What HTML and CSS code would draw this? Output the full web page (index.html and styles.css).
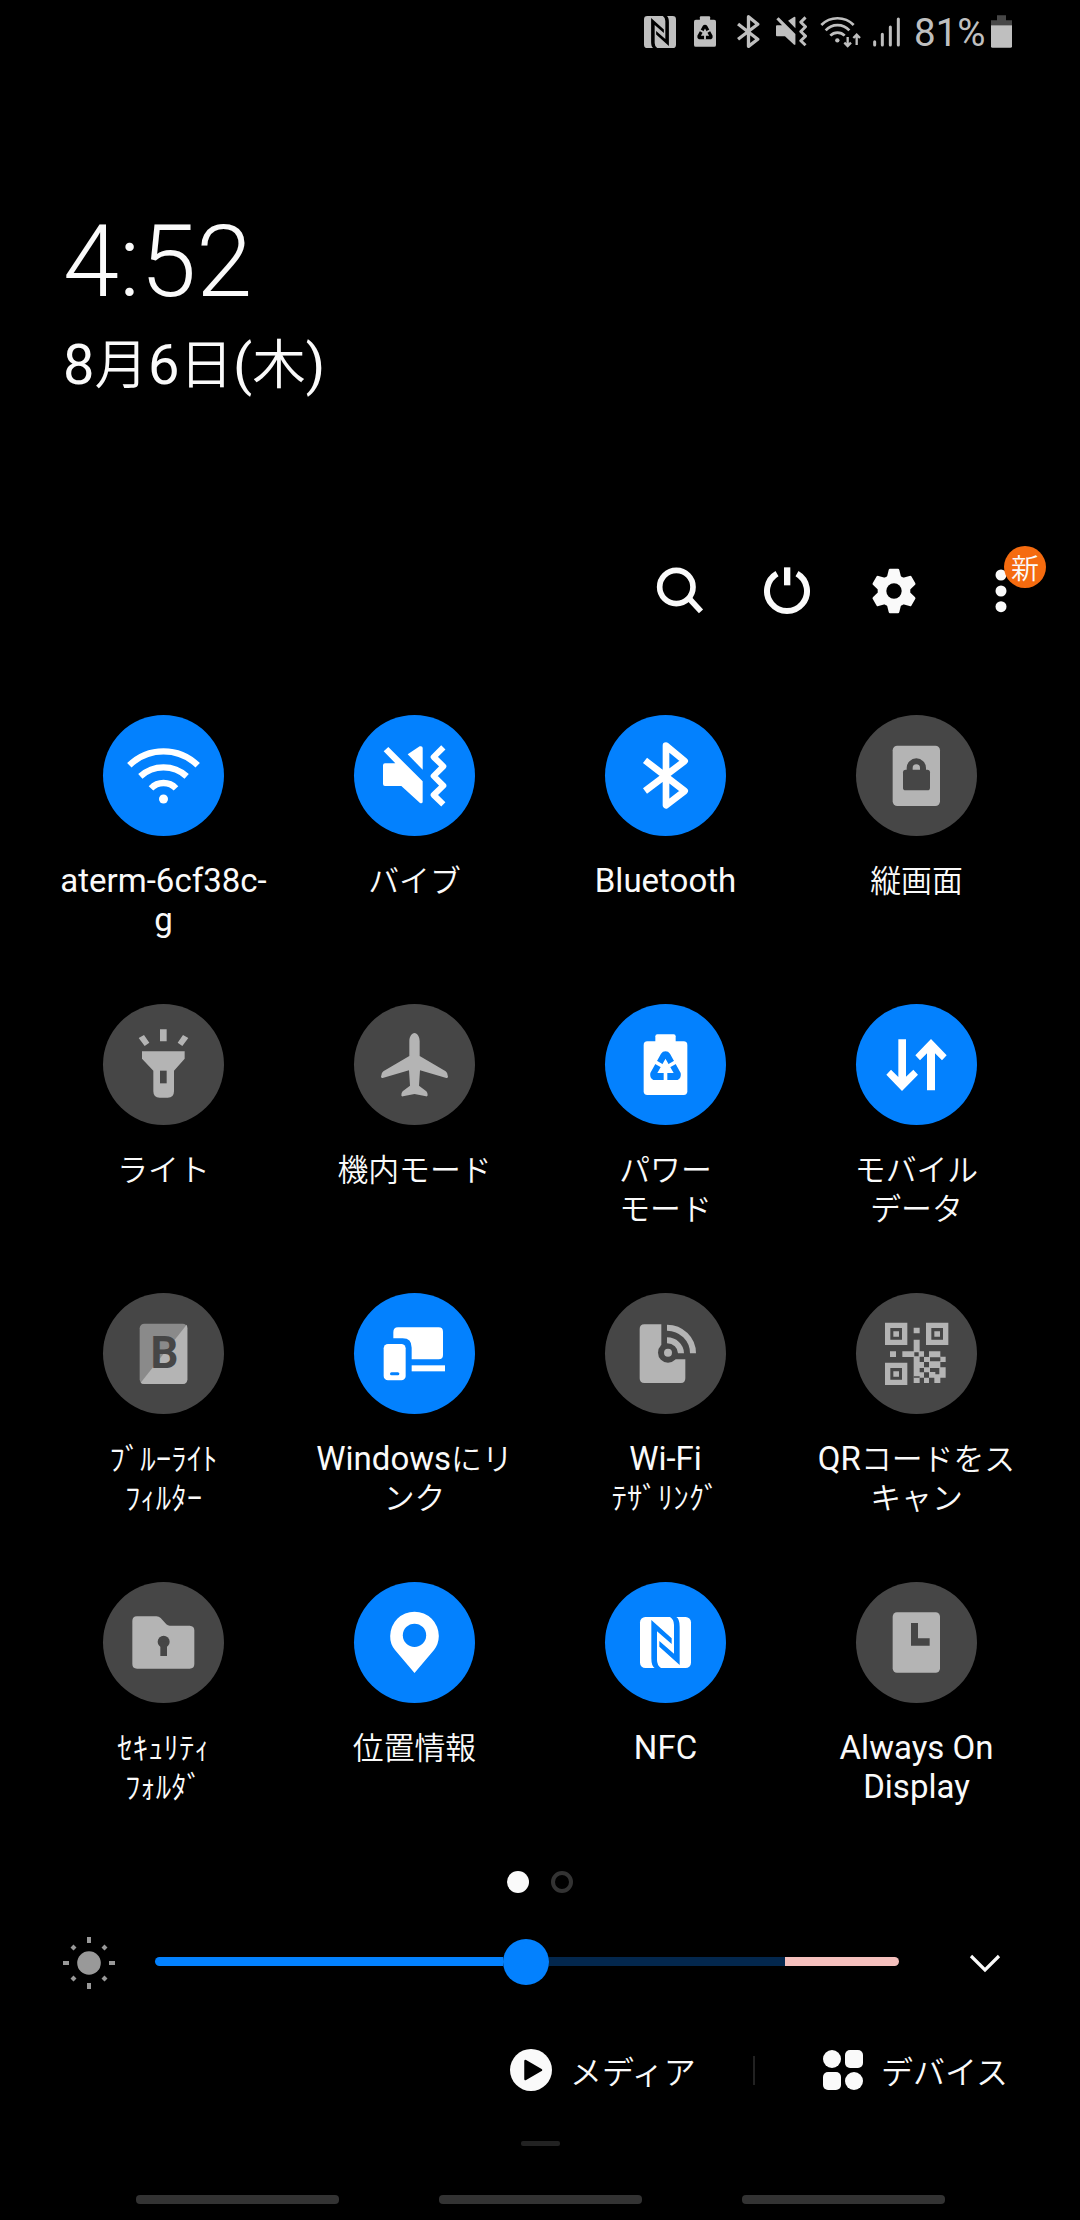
FILE: index.html
```
<!DOCTYPE html>
<html lang="ja">
<head>
  <meta charset="UTF-8">
  <meta name="viewport" content="width=device-width, initial-scale=1.0">
  <title>クイック設定パネル</title>
  <link rel="stylesheet" href="styles.css">
</head>
<body>
  <!-- icons used both in the status bar and in the tiles -->
  <svg class="defs">
    <defs>
      <g id="nfc">
        <rect x="105" y="105" width="153" height="153" rx="16" fill="currentColor"/>
        <path class="cut" d="M139 114L200 169V186L156 148V234Q156 250 168 258H149Q139 252 139 229Z"/>
        <path class="cut" d="M224 249L163 194V177L207 215V129Q207 113 195 105H214Q224 111 224 134Z"/>
      </g>
      <g id="power-mode">
        <rect x="116" y="112" width="131" height="161" rx="11" fill="currentColor"/>
        <rect x="151" y="91" width="61" height="30" rx="6" fill="currentColor"/>
        <path class="cut" fill-rule="evenodd" d="M168 149Q173 142 181.500 142Q190 142 195 149L227 207Q230 222 218 228H145Q133 222 136 207ZM181.500 164L157 207H206Z"/>
        <path d="M181.500 200V230M149 173L172 186M214 173L191 186" stroke="currentColor" stroke-width="11"/>
      </g>
      <g id="bluetooth">
        <path d="M120 136L239 228L183 271V92L239 138L120 228" fill="none" stroke="currentColor" stroke-width="20" stroke-linejoin="round"/>
      </g>
      <g id="vibrate">
        <path d="M103 96L206 199V261Q205 266 198 264L142 213H93Q87 213 87 207V151Q87 145 93 145H124L89 109Z" fill="currentColor"/>
        <path d="M206 164L161 118L197 94Q206 92 206 99Z" fill="currentColor"/>
        <path d="M268 97L239 126L268 154L239 183L268 212L239 240L268 268" fill="none" stroke="currentColor" stroke-width="18" stroke-linejoin="round"/>
      </g>
    </defs>
  </svg>

  <header class="status">
    <svg class="s-nfc" viewBox="105 105 153 153"><use href="#nfc"/></svg>
    <svg class="s-power" viewBox="116 91 131 182"><use href="#power-mode"/></svg>
    <svg class="s-bt" viewBox="111 82 138 199"><use href="#bluetooth"/></svg>
    <svg class="s-vib" viewBox="87 90 190 187"><use href="#vibrate"/></svg>
    <svg class="s-wifi" viewBox="0 0 123 96" fill="none" stroke="currentColor">
      <path d="M4 27A68 68 0 0 1 101 27M17 43A48 48 0 0 1 88 43M31 59A30 30 0 0 1 74 59" stroke-width="8"/>
      <circle cx="52" cy="73" r="6.500" fill="currentColor" stroke="none"/>
      <path d="M83 63V90M73 80L83 90L93 80M110 87V58M100 66L110 56L120 66" stroke-width="7"/>
    </svg>
    <svg class="s-signal" viewBox="0 0 81 90" stroke="currentColor" stroke-width="9" stroke-linecap="round">
      <path d="M5 74V84M28 52V84M52 30V84M76 6V84"/>
    </svg>
    <span class="percent">81%</span>
    <svg class="s-battery" viewBox="0 0 63 98">
      <path d="M18 0H45V15H63V30H0V15H18Z" fill="#474747"/>
      <path d="M0 30H63V93Q63 98 58 98H5Q0 98 0 93Z" fill="currentColor"/>
    </svg>
  </header>

  <section class="clock">
    <div class="time">4:52</div>
    <div class="date">8<span class="jp">月</span>6<span class="jp">日</span>(<span class="jp">木</span>)</div>
  </section>

  <nav class="toolbar">
    <svg viewBox="0 0 144 144" fill="none" stroke="currentColor" stroke-width="17">
      <circle cx="61" cy="60" r="50"/>
      <path d="M98 93L135 133"/>
    </svg>
    <svg viewBox="0 0 144 144">
      <path d="M42 20A60 60 0 1 0 102 20" fill="none" stroke="currentColor" stroke-width="18"/>
      <rect x="63" y="1" width="19" height="54" fill="currentColor"/>
    </svg>
    <svg viewBox="0 0 144 144" fill="currentColor">
      <circle cx="72" cy="72" r="49"/>
      <path id="tooth" d="M60 5H84Q87 5 88 9L94 34H50L56 9Q57 5 60 5Z"/>
      <use href="#tooth" transform="rotate(60 72 72)"/>
      <use href="#tooth" transform="rotate(120 72 72)"/>
      <use href="#tooth" transform="rotate(180 72 72)"/>
      <use href="#tooth" transform="rotate(240 72 72)"/>
      <use href="#tooth" transform="rotate(300 72 72)"/>
      <circle cx="72" cy="72" r="23" fill="#000"/>
    </svg>
    <div class="more">
      <svg viewBox="0 0 144 144" fill="currentColor">
        <circle cx="72" cy="24" r="16.500"/>
        <circle cx="72" cy="72" r="16.500"/>
        <circle cx="72" cy="119" r="16.500"/>
      </svg>
      <span class="badge">新</span>
    </div>
  </nav>

  <main class="tiles">
    <div class="tile on">
      <svg viewBox="0 0 363 363">
        <path d="M79 151A146 146 0 0 1 284 151M112 184A103 103 0 0 1 251 184M144 220A52 52 0 0 1 219 220" fill="none" stroke="currentColor" stroke-width="19"/>
        <circle cx="181.500" cy="252" r="13.500" fill="currentColor"/>
      </svg>
      <p>aterm-6cf38c-<br>g</p>
    </div>
    <div class="tile on">
      <svg viewBox="0 0 363 363"><use href="#vibrate"/></svg>
      <p><span class="jp">バイブ</span></p>
    </div>
    <div class="tile on">
      <svg viewBox="0 0 363 363"><use href="#bluetooth"/></svg>
      <p>Bluetooth</p>
    </div>
    <div class="tile">
      <svg viewBox="0 0 363 363">
        <rect x="110" y="92" width="142" height="181" rx="14" fill="currentColor"/>
        <rect class="cut" x="141" y="164" width="81" height="62" rx="8"/>
        <path d="M161 168V159A20 20 0 0 1 201 159V168" fill="none" stroke="#464646" stroke-width="18"/>
      </svg>
      <p><span class="jp">縦画面</span></p>
    </div>

    <div class="tile">
      <svg viewBox="0 0 363 363" fill="currentColor">
        <path d="M171 76H191V112H171ZM107 102L123 93L139 116L125 126ZM256 102L240 93L224 116L238 126Z"/>
        <path d="M117 142H245V164L213 200V262Q213 281 194 281H170Q151 281 151 262V200L117 164Z"/>
        <rect class="cut" x="171" y="200" width="20" height="38"/>
      </svg>
      <p><span class="jp">ライト</span></p>
    </div>
    <div class="tile">
      <svg viewBox="0 0 363 363" fill="currentColor">
        <path d="M181.500 87C190 87 197 98 197 112V156L275 202Q282 207 282 218Q281 223 277 222L198 199L195 245L217 262Q222 268 221 274Q220 278 216 277L181.500 270L147 277Q142 278 142 274Q141 268 146 262L168 245L165 199L86 222Q82 223 81 218Q81 207 88 202L166 156V112C166 98 173 87 181.500 87Z"/>
      </svg>
      <p><span class="jp">機内モード</span></p>
    </div>
    <div class="tile on">
      <svg viewBox="0 0 363 363"><use href="#power-mode"/></svg>
      <p><span class="jp">パワー<br>モード</span></p>
    </div>
    <div class="tile on">
      <svg viewBox="0 0 363 363" fill="currentColor">
        <path d="M127 106H150V218L172 197L186 212L138 261L91 212L105 197L127 219Z"/>
        <path d="M213 259H237V148L258 169L272 154L225 105L178 154L192 169L213 148Z"/>
      </svg>
      <p><span class="jp">モバイル<br>データ</span></p>
    </div>

    <div class="tile">
      <svg viewBox="0 0 363 363">
        <rect x="110" y="92" width="143" height="181" rx="14" fill="#8a8a8a"/>
        <path d="M251 95Q253 100 253 106V259Q253 273 239 273H124Q116 273 113 269Z" fill="currentColor"/>
        <text class="letter" x="184" y="225">B</text>
      </svg>
      <p><span class="jp">ﾌﾞﾙｰﾗｲﾄ<br>ﾌｨﾙﾀｰ</span></p>
    </div>
    <div class="tile on">
      <svg viewBox="0 0 363 363" fill="currentColor">
        <path d="M118 136V118Q118 103 132 103H254Q267 103 267 116V186Q267 199 254 199H173V164Q173 136 146 136Z"/>
        <rect x="173" y="217" width="100" height="18"/>
        <rect x="89" y="153" width="66" height="109" rx="13"/>
        <rect class="cut" x="108" y="238" width="28" height="9" rx="4.500"/>
      </svg>
      <p>Windows<span class="jp">にリ<br>ンク</span></p>
    </div>
    <div class="tile">
      <svg viewBox="0 0 363 363">
        <path d="M118 94H169V179H189V199H241V256Q241 270 228 270H118Q104 270 104 256V108Q104 94 118 94Z" fill="currentColor"/>
        <circle class="cut" cx="189" cy="179" r="30"/>
        <circle cx="189" cy="179" r="12" fill="currentColor"/>
        <path d="M186 142A42 39 0 0 1 228 181M186 104A78 77 0 0 1 264 181" fill="none" stroke="currentColor" stroke-width="18"/>
      </svg>
      <p>Wi-Fi<br><span class="jp">ﾃｻﾞﾘﾝｸﾞ</span></p>
    </div>
    <div class="tile">
      <svg viewBox="0 0 363 363" fill="currentColor">
        <path fill-rule="evenodd" d="M87 89H154V156H87ZM103 105V140H138V105ZM210 89H277V156H210ZM226 105V140H261V105ZM87 209H154V276H87ZM103 225V260H138V225Z"/>
        <path d="M112 115H129V131H112ZM235 115H252V131H235ZM112 235H129V251H112ZM173 104H191V121H173ZM102 175H120V192H102Z"/>
        <path d="M173 140H191V175H204V191H219V175H253V191H269V207H253V223H269V254H253V270H235V254H219V270H204V254H191V270H173V192H139V175H173Z"/>
        <path class="cut" d="M175 178H188V190H175ZM191 191H204V207H191ZM204 175H219V191H204ZM222 193H253V205H222ZM204 207H219V223H204ZM191 225H204V238H191ZM222 225H250V244H238V237H222ZM204 238H219V254H204ZM173 254V250H191V254Z"/>
      </svg>
      <p>QR<span class="jp">コードをス<br>キャン</span></p>
    </div>

    <div class="tile">
      <svg viewBox="0 0 363 363" fill="currentColor">
        <path d="M102 103H160Q168 103 173 108L190 127Q195 131 200 131H260Q274 132 274 145V246Q274 260 260 260H102Q88 260 88 246V117Q88 103 102 103Z"/>
        <circle class="cut" cx="182" cy="179" r="18"/>
        <rect class="cut" x="172" y="179" width="20" height="43"/>
      </svg>
      <p><span class="jp">ｾｷｭﾘﾃｨ<br>ﾌｫﾙﾀﾞ</span></p>
    </div>
    <div class="tile on">
      <svg viewBox="0 0 363 363" fill="currentColor">
        <path d="M181.500 89A73 73 0 0 1 254.500 162Q254 186 240 204L181.500 273L123 204Q108 186 108.500 162A73 73 0 0 1 181.500 89Z"/>
        <circle class="cut" cx="181.500" cy="160" r="35"/>
      </svg>
      <p><span class="jp">位置情報</span></p>
    </div>
    <div class="tile on">
      <svg viewBox="0 0 363 363"><use href="#nfc"/></svg>
      <p>NFC</p>
    </div>
    <div class="tile">
      <svg viewBox="0 0 363 363">
        <rect x="110" y="91" width="142" height="181" rx="13" fill="currentColor"/>
        <path class="cut" d="M165 123H186V169H221V191H165Z"/>
      </svg>
      <p>Always On<br>Display</p>
    </div>
  </main>

  <div class="pager">
    <span class="dot active"></span>
    <span class="dot"></span>
  </div>

  <div class="brightness">
    <svg class="sun" viewBox="0 0 54 54" fill="currentColor">
      <circle cx="27" cy="27" r="11.800"/>
      <path d="M25 1H29V7H25ZM25 47H29V53H25ZM1 25H7V29H1ZM47 25H53V29H47Z"/>
      <path d="M11.500 8.500L14.500 11.500L11.500 14.500L8.500 11.500ZM42.500 8.500L45.500 11.500L42.500 14.500L39.500 11.500ZM11.500 39.500L14.500 42.500L11.500 45.500L8.500 42.500ZM42.500 39.500L45.500 42.500L42.500 45.500L39.500 42.500Z"/>
    </svg>
    <div class="track">
      <span class="level"></span>
      <span class="knob"></span>
      <span class="rest"></span>
      <span class="glare"></span>
    </div>
    <svg class="chevron" viewBox="0 0 32 20" fill="none" stroke="currentColor" stroke-width="3.200">
      <path d="M2 3L16 17L30 3"/>
    </svg>
  </div>

  <div class="actions">
    <svg class="media" viewBox="0 0 42 42">
      <circle cx="21" cy="21" r="21" fill="currentColor"/>
      <path d="M15.500 12L31 21L15.500 30Z" stroke="#000" stroke-width="2.500" stroke-linejoin="round"/>
    </svg>
    <span class="label">メディア</span>
    <span class="divider"></span>
    <svg class="devices" viewBox="0 0 40 40" fill="currentColor">
      <circle cx="9" cy="9" r="9"/>
      <rect x="22" y="0" width="18" height="18" rx="5"/>
      <rect x="0" y="22" width="18" height="18" rx="5"/>
      <circle cx="31" cy="31" r="9"/>
    </svg>
    <span class="label">デバイス</span>
  </div>

  <div class="handle"></div>

  <footer class="navbar">
    <span></span>
    <span></span>
    <span></span>
  </footer>
</body>
</html>
```
FILE: styles.css
```
* {
  box-sizing: border-box;
}
body {
  margin: 0;
  width: 1080px;
  height: 2220px;
  overflow: hidden;
  background: #000;
  color: #fafafa;
  font-family: Roboto, "Noto Sans CJK JP", sans-serif;
  display: flex;
  flex-direction: column;
}
svg {
  display: block;
  flex: none;
}
p {
  margin: 0;
}
.defs {
  width: 0;
  height: 0;
  position: absolute;
}
.cut {
  fill: var(--bg, #000);
}
.jp {
  font-family: "Noto Sans CJK JP", sans-serif;
  font-weight: 350;
  font-size: 0.935em;
  line-height: 1;
}

/* status bar */
.status {
  height: 63px;
  padding-right: 68px;
  display: flex;
  justify-content: flex-end;
  align-items: center;
  color: #bfbfbf;
}
.s-nfc {
  width: 32px;
  height: 32px;
}
.s-power {
  width: 22px;
  height: 31px;
  margin-left: 18px;
}
.s-bt {
  width: 24px;
  height: 33px;
  margin-left: 20px;
}
.s-vib {
  width: 31px;
  height: 31px;
  margin-left: 16px;
}
.s-wifi {
  width: 41px;
  height: 32px;
  margin-left: 13px;
}
.s-signal {
  width: 27px;
  height: 30px;
  margin-left: 12px;
}
.percent {
  width: 72px;
  margin-left: 14px;
  margin-right: 5px;
  font-size: 38.5px;
  line-height: 44px;
  padding-top: 2px;
}
.s-battery {
  width: 21px;
  height: 33px;
}

/* clock */
.clock {
  height: 504px;
  padding: 140px 0 0 63px;
}
.time {
  font-size: 101px;
  font-weight: 300;
  line-height: 118px;
}
.date {
  margin-top: 11px;
  font-size: 56px;
  line-height: 66px;
}
.date .jp {
  font-size: 53.5px;
}

/* search, power, settings, more */
.toolbar {
  height: 148px;
  padding-right: 55px;
  display: flex;
  justify-content: flex-end;
  gap: 59px;
}
.toolbar svg {
  width: 48px;
  height: 48px;
}
.more {
  position: relative;
  height: 48px;
}
.badge {
  position: absolute;
  left: 27px;
  top: -21px;
  width: 42px;
  height: 42px;
  border-radius: 50%;
  background: #f56b0f;
  font-family: "Noto Sans CJK JP", sans-serif;
  font-size: 28px;
  font-weight: 350;
  line-height: 42px;
  text-align: center;
}

/* tiles */
.tiles {
  width: 1004px;
  height: 1156px;
  margin-left: 38px;
  display: grid;
  grid-template-columns: repeat(4, 251px);
  grid-template-rows: repeat(4, 289px);
}
.tile {
  --bg: #464646;
  display: flex;
  flex-direction: column;
  align-items: center;
  gap: 25px;
}
.tile.on {
  --bg: #0381fe;
}
.tile svg {
  width: 121px;
  height: 121px;
  border-radius: 50%;
  background: var(--bg);
  color: #b4b4b4;
}
.tile.on svg {
  color: #fff;
}
.tile p {
  font-size: 33px;
  line-height: 39px;
  text-align: center;
  white-space: nowrap;
}
.letter {
  font-size: 131px;
  font-weight: 700;
  text-anchor: middle;
  fill: var(--bg);
}

/* pager */
.pager {
  height: 22px;
  margin-left: 507px;
  display: flex;
  gap: 22px;
}
.dot {
  width: 22px;
  height: 22px;
  border: 4px solid #333;
  border-radius: 50%;
}
.dot.active {
  border: none;
  background: #fafafa;
}

/* brightness slider */
.brightness {
  height: 54px;
  margin-top: 43px;
  padding-left: 62px;
  display: flex;
  align-items: center;
}
.sun {
  width: 54px;
  height: 54px;
  color: #999;
}
.track {
  width: 744px;
  margin: 0 70px 3px 39px;
  display: flex;
  align-items: center;
}
.level {
  width: 348px;
  height: 9px;
  border-radius: 5px 0 0 5px;
  background: #0381fe;
}
.knob {
  width: 46px;
  height: 46px;
  border-radius: 50%;
  background: #0381fe;
}
.rest {
  width: 236px;
  height: 9px;
  background: #03274d;
}
.glare {
  width: 114px;
  height: 9px;
  border-radius: 0 5px 5px 0;
  background: #f5c0bd;
}
.chevron {
  width: 32px;
  height: 20px;
}

/* media and devices */
.actions {
  height: 42px;
  margin-top: 59px;
  padding-right: 71px;
  display: flex;
  align-items: center;
  justify-content: flex-end;
}
.media {
  width: 42px;
  height: 42px;
}
.label {
  width: 128px;
  margin-left: 18px;
  font-family: "Noto Sans CJK JP", sans-serif;
  font-size: 32px;
  font-weight: 350;
  line-height: 42px;
}
.divider {
  width: 2px;
  height: 29px;
  margin: 0 68px 0 55px;
  background: #222;
}
.devices {
  width: 40px;
  height: 40px;
}
.handle {
  width: 39px;
  height: 5px;
  margin: 50px auto 0;
  border-radius: 2px;
  background: #222;
}
.navbar {
  margin-top: 49px;
  display: flex;
  justify-content: center;
  gap: 100px;
}
.navbar span {
  width: 203px;
  height: 9px;
  border-radius: 4px;
  background: #333;
}
```
